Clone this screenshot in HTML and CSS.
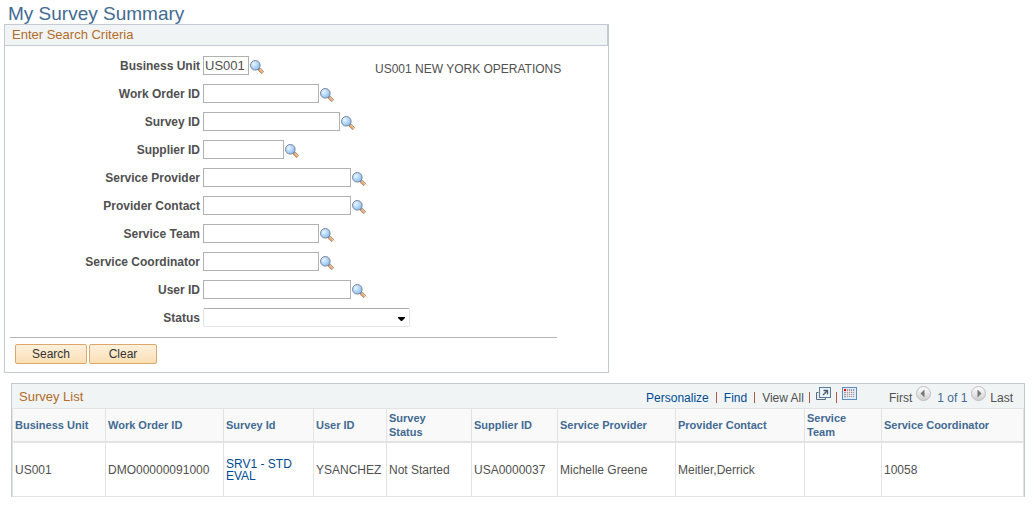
FILE: index.html
```html
<!DOCTYPE html>
<html lang="en">
<head>
<meta charset="utf-8">
<title>My Survey Summary</title>
<link rel="stylesheet" href="styles.css">
</head>
<body>
<svg class="defs" aria-hidden="true">
  <defs>
    <radialGradient id="lensFill" cx="35%" cy="35%" r="75%">
      <stop offset="0" stop-color="#eaf5ff"/>
      <stop offset="1" stop-color="#7fb8f2"/>
    </radialGradient>
    <linearGradient id="discFill" x1="0" y1="0" x2="0" y2="1">
      <stop offset="0" stop-color="#ffffff"/>
      <stop offset="1" stop-color="#cfcfcf"/>
    </linearGradient>
    <symbol id="lookup" viewBox="0 0 14 14">
      <path d="M8.500 8.500L12.800 12.800" stroke="#85858c" stroke-width="3.400"/>
      <path d="M9.200 9.200L12.800 12.800" stroke="#f3a45c" stroke-width="2.200"/>
      <path d="M9.700 9L13 12.300" stroke="#fbd7a0" stroke-width="1"/>
      <circle cx="5.300" cy="5.300" r="4.800" fill="url(#lensFill)" stroke="#77869c"/>
    </symbol>
  </defs>
</svg>
<h1 class="page-title">My Survey Summary</h1>
<form class="criteria">
  <h2 class="criteria-title">Enter Search Criteria</h2>
  <div class="fields">
    <div class="field"><label for="unit">Business Unit</label><input id="unit" class="w-unit" type="text" value="US001"><button type="button" class="lookup" aria-label="Look up Business Unit"><svg><use href="#lookup"/></svg></button><span class="unit-name">US001 NEW YORK OPERATIONS</span></div>
    <div class="field"><label for="order">Work Order ID</label><input id="order" class="w-medium" type="text"><button type="button" class="lookup" aria-label="Look up Work Order ID"><svg><use href="#lookup"/></svg></button></div>
    <div class="field"><label for="survey">Survey ID</label><input id="survey" class="w-survey" type="text"><button type="button" class="lookup" aria-label="Look up Survey ID"><svg><use href="#lookup"/></svg></button></div>
    <div class="field"><label for="supplier">Supplier ID</label><input id="supplier" class="w-supplier" type="text"><button type="button" class="lookup" aria-label="Look up Supplier ID"><svg><use href="#lookup"/></svg></button></div>
    <div class="field"><label for="provider">Service Provider</label><input id="provider" class="w-long" type="text"><button type="button" class="lookup" aria-label="Look up Service Provider"><svg><use href="#lookup"/></svg></button></div>
    <div class="field"><label for="contact">Provider Contact</label><input id="contact" class="w-long" type="text"><button type="button" class="lookup" aria-label="Look up Provider Contact"><svg><use href="#lookup"/></svg></button></div>
    <div class="field"><label for="team">Service Team</label><input id="team" class="w-medium" type="text"><button type="button" class="lookup" aria-label="Look up Service Team"><svg><use href="#lookup"/></svg></button></div>
    <div class="field"><label for="coordinator">Service Coordinator</label><input id="coordinator" class="w-medium" type="text"><button type="button" class="lookup" aria-label="Look up Service Coordinator"><svg><use href="#lookup"/></svg></button></div>
    <div class="field"><label for="user">User ID</label><input id="user" class="w-long" type="text"><button type="button" class="lookup" aria-label="Look up User ID"><svg><use href="#lookup"/></svg></button></div>
    <div class="field"><label for="status">Status</label><span class="select-wrap"><select id="status"><option></option></select><svg class="caret" viewBox="0 0 7 4" aria-hidden="true"><path d="M0 0H7V1L4 4H3L0 1Z"/></svg></span></div>
  </div>
  <div class="actions">
    <button type="submit" class="action w-search">Search</button>
    <button type="reset" class="action w-clear">Clear</button>
  </div>
</form>
<section class="grid">
  <div class="grid-bar">
    <h2 class="grid-title">Survey List</h2>
    <div class="tools">
      <a href="#">Personalize</a><i class="sep"></i>
      <a href="#">Find</a><i class="sep"></i>
      <span>View All</span><i class="sep narrow"></i>
      <button type="button" class="icon" aria-label="Open in new window"><svg class="popup" viewBox="0 0 16 14"><path d="M3.500 5.500H1.500V12.500H10.500V10.500" fill="#e4ebf0" stroke="#5d6e80"/><rect x="4.500" y=".5" width="11" height="10" fill="#d9e6f0" stroke="#5d7d9c"/><rect x="5.500" y="1.500" width="9" height="8" fill="#f2f7fa"/><path d="M8 8L12 4M8.500 3.500H12.500V7.500" fill="none" stroke="#4a5c70" stroke-width="1.300"/></svg></button><i class="sep narrow"></i>
      <button type="button" class="icon" aria-label="Download to spreadsheet"><svg class="sheet" viewBox="0 0 15 13"><rect x=".5" y=".5" width="14" height="12" fill="#e4eef8" stroke="#5b8dc0"/><path d="M2 2H13V11H2Z" fill="#a39da6"/><path d="M4.500 2V11M6.500 2V11M8.500 2V11M10.500 2V11M12.500 2V11M2 4.500H13M2 6.500H13M2 8.500H13M2 10.500H13" stroke="#f6f6fa" stroke-width=".7"/><path d="M2 2H4V4H2Z" fill="#f00"/></svg></button>
    </div>
    <div class="pager">
      <span>First</span>
      <button type="button" class="icon" aria-label="Previous"><svg class="disc" viewBox="0 0 15 15"><circle cx="7.500" cy="7.500" r="7" fill="url(#discFill)" stroke="#bcbcbc"/><path d="M8.500 3.500V11.500L4.500 7.500Z" fill="#777"/></svg></button>
      <span class="count">1 of 1</span>
      <button type="button" class="icon" aria-label="Next"><svg class="disc" viewBox="0 0 15 15"><circle cx="7.500" cy="7.500" r="7" fill="url(#discFill)" stroke="#bcbcbc"/><path d="M6.500 3.500V11.500L10.500 7.500Z" fill="#777"/></svg></button>
      <span>Last</span>
    </div>
  </div>
  <table>
    <colgroup><col class="c-unit"><col class="c-order"><col class="c-survey"><col class="c-user"><col class="c-status"><col class="c-supplier"><col class="c-provider"><col class="c-contact"><col class="c-team"><col class="c-coord"></colgroup>
    <thead><tr><th>Business Unit</th><th>Work Order ID</th><th>Survey Id</th><th>User ID</th><th>Survey<br>Status</th><th>Supplier ID</th><th>Service Provider</th><th>Provider Contact</th><th>Service<br>Team</th><th>Service Coordinator</th></tr></thead>
    <tbody><tr><td>US001</td><td>DMO00000091000</td><td><a href="#">SRV1 - STD EVAL</a></td><td>YSANCHEZ</td><td>Not Started</td><td>USA0000037</td><td>Michelle Greene</td><td>Meitler,Derrick</td><td></td><td>10058</td></tr></tbody>
  </table>
</section>
</body>
</html>
```
FILE: styles.css
```css
* { box-sizing: border-box; }
body { margin: 0; padding: 3px 11px 10px 4px; background: #fff; color: #505050; font: 12px/14px "Liberation Sans", Arial, sans-serif; }
.defs { position: absolute; width: 0; height: 0; }
a { color: #004b91; text-decoration: none; }
button { font: inherit; cursor: pointer; }
h1, h2 { margin: 0; font-weight: normal; }
.page-title { padding-left: 4px; color: #426a92; font-size: 19px; line-height: 21px; }

.criteria { width: 605px; max-width: 100%; border: 1px solid #c5c9d3; }
.criteria-title { height: 21px; padding-left: 7px; border-right: 1px solid #c5c9d3; border-bottom: 1px solid #c5c9d3; background: #f0f4f5; color: #b36b27; font-size: 13px; line-height: 20px; }
.fields { display: flex; flex-direction: column; gap: 9px; margin: 0 51px 0 5px; padding: 10px 0; border-bottom: 1px solid #b4b4b4; }
.field { display: flex; align-items: center; height: 19px; }
label { flex: none; width: 190px; margin-right: 3px; text-align: right; font-weight: bold; }
input { flex: none; height: 19px; padding: 0 1px; border: 1px solid #b1b1b1; border-radius: 0; color: #505050; font: inherit; font-size: 13px; }
.w-unit { width: 46px; }
.w-medium { width: 116px; }
.w-survey { width: 137px; }
.w-supplier { width: 81px; }
.w-long { width: 148px; }
.lookup { display: flex; margin-left: 1px; padding: 3px 0 0; border: 0; background: none; }
.lookup svg { width: 14px; height: 14px; }
.unit-name { margin-left: 111px; padding-top: 7px; white-space: nowrap; }
.select-wrap { position: relative; display: flex; width: 207px; }
select { width: 100%; height: 19px; appearance: none; border: 1px solid #e0e3e8; border-top-color: #abadb3; border-radius: 2px; background: #fff; font: inherit; }
.caret { position: absolute; right: 5px; top: 9px; width: 7px; height: 4px; pointer-events: none; }
.actions { display: flex; gap: 2px; padding: 6px 10px 8px; }
.action { height: 20px; padding: 0; border: 1px solid #dca66c; border-radius: 2px; background: linear-gradient(#fdf1dc, #fbdfb4); color: #333; }
.w-search { width: 72px; }
.w-clear { width: 68px; }

.grid { margin: 10px 0 0 7px; border: 1px solid #c5c9d3; border-bottom: 0; }
.grid-bar { display: flex; align-items: center; height: 24px; background: #f0f4f5; }
.grid-title { flex: 1; padding: 2px 0 0 7px; color: #b36b27; font-size: 13px; }
.tools, .pager { display: flex; align-items: center; padding-top: 3px; }
.sep { width: 1px; height: 11px; margin: 0 7px; background: #b05a46; }
.sep.narrow { margin: 0 5px; }
.icon { display: flex; padding: 0 0 8px; border: 0; background: none; }
.popup { width: 16px; height: 14px; }
.sheet { width: 15px; height: 13px; }
.disc { width: 15px; height: 15px; }
.pager { gap: 4px; margin-left: 32px; padding-right: 11px; }
.count { padding-left: 2px; color: #426a92; }

table { width: 100%; table-layout: fixed; border-collapse: separate; border-spacing: 0; }
th, td { padding: 0 2px; border-right: 1px solid #e3e3e3; text-align: left; }
th:first-child, td:first-child { border-left: 1px solid #e3e3e3; }
th { height: 35px; border-top: 1px solid #e3e3e3; border-bottom: 2px solid #e3e3e3; background: #f9f9f9; color: #426a92; font-size: 11px; }
td { height: 54px; border-bottom: 1px solid #e3e3e3; line-height: 12px; }
.c-unit { width: 94px; }
.c-order { width: 118px; }
.c-survey { width: 90px; }
.c-user { width: 73px; }
.c-status { width: 85px; }
.c-supplier { width: 86px; }
.c-provider { width: 118px; }
.c-contact { width: 129px; }
.c-team { width: 77px; }
.c-coord { width: 142px; }
```
